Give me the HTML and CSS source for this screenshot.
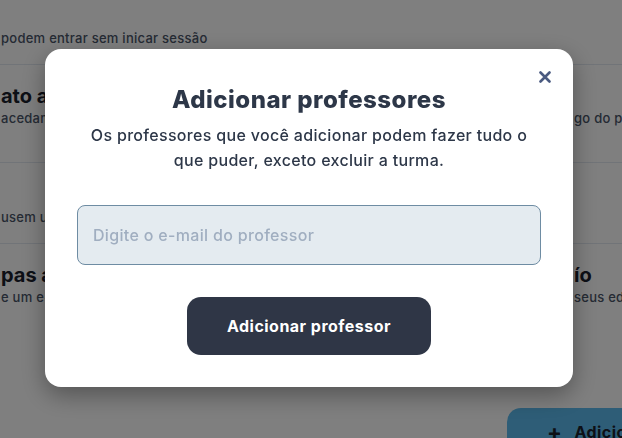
FILE: index.html
```html
<!DOCTYPE html>
<html lang="pt">
<head>
    <meta charset="UTF-8">
    <meta name="viewport" content="width=device-width, initial-scale=1.0">
    <title>Configurações da turma</title>
    <link rel="stylesheet" href="styles.css">
</head>
<body>
    <div class="page">
        <div class="row row-first">
            <div class="col-left">
                <p class="sub">podem entrar sem inicar sessão</p>
            </div>
            <div class="col-right"></div>
        </div>
        <div class="row row-tall">
            <div class="col-left">
                <h3 class="heading">ato automático</h3>
                <p class="sub">acedam à turma sem código</p>
            </div>
            <div class="col-right">
                <h3 class="heading">&nbsp;</h3>
                <p class="sub">go do pro</p>
            </div>
        </div>
        <div class="row row-plain">
            <div class="col-left">
                <p class="sub">usem um código para entrar</p>
            </div>
            <div class="col-right"></div>
        </div>
        <div class="row row-last">
            <div class="col-left">
                <h3 class="heading">pas automáticas</h3>
                <p class="sub">e um e-mail aos alunos</p>
            </div>
            <div class="col-right">
                <h3 class="heading">ío</h3>
                <p class="sub">seus ed</p>
            </div>
        </div>
        <div class="footer">
            <button class="add-btn" type="button"><span class="plus">+</span>Adicio</button>
        </div>
    </div>

    <div class="overlay">
        <div class="modal">
            <button class="close-btn" type="button" aria-label="Fechar">
                <svg width="12" height="12" viewBox="0 0 12 12">
                    <path d="M1.5 1.5 L10.5 10.5 M10.5 1.5 L1.5 10.5" stroke="currentColor" stroke-width="2.6" stroke-linecap="round"/>
                </svg>
            </button>
            <h2 class="modal-title">Adicionar professores</h2>
            <p class="modal-text">Os professores que você adicionar podem fazer tudo o que puder, exceto excluir a turma.</p>
            <input class="email-input" type="email" placeholder="Digite o e-mail do professor">
            <button class="submit-btn" type="button">Adicionar professor</button>
        </div>
    </div>
</body>
</html>
```
FILE: styles.css
```css
body {
    margin: 0;
    overflow: hidden;
    font-family: Inter, "Noto Sans", sans-serif;
    background-color: #fff;
    color: #1a202c;
}

.page {
    width: 622px;
}

.row {
    display: flex;
    border-bottom: 1px solid #e2e8f0;
}

.row-first {
    padding: 29px 0 17px;
}

.row-tall {
    padding: 18px 0 35px;
}

.row-plain {
    padding: 45px 0 17px;
}

.row-last {
    padding: 18px 0 0;
    border-bottom: none;
}

.col-left {
    flex-shrink: 0;
    width: 573px;
    padding-left: 1px;
    box-sizing: border-box;
    overflow: hidden;
}

.col-right {
    flex: 1;
    min-width: 0;
    padding-left: 1px;
    white-space: nowrap;
}

.heading {
    margin: 0;
    font-size: 20px;
    line-height: 26px;
    font-weight: 700;
    color: #1a202c;
    white-space: nowrap;
}

.sub {
    margin: 0;
    font-size: 13px;
    line-height: 18px;
    font-weight: 500;
    color: #4a5568;
    letter-spacing: 0.02em;
    white-space: nowrap;
}

.footer {
    display: flex;
    padding-left: 507px;
    margin-top: 102px;
}

.add-btn {
    display: flex;
    align-items: center;
    height: 48px;
    width: 115px;
    padding: 0 0 0 40px;
    border: none;
    border-radius: 14px 0 0 14px;
    background-color: #5cbbee;
    color: #1a202c;
    font-family: inherit;
    font-size: 16px;
    font-weight: 700;
    letter-spacing: 0.03em;
    white-space: nowrap;
    overflow: hidden;
}

.plus {
    font-size: 22px;
    margin-right: 12px;
}

.overlay {
    position: fixed;
    inset: 0;
    background-color: rgba(0, 0, 0, 0.5);
    display: flex;
    align-items: flex-start;
    padding: 49px 0 0 45px;
}

.modal {
    position: relative;
    width: 528px;
    box-sizing: border-box;
    padding: 36px 32px 32px;
    background-color: #fff;
    border-radius: 16px;
    box-shadow: 0 8px 24px rgba(0, 0, 0, 0.35);
    display: flex;
    flex-direction: column;
    align-items: center;
    text-align: center;
    color: #2d3748;
    letter-spacing: 0.03em;
}

.close-btn {
    position: absolute;
    top: 22px;
    right: 22px;
    width: 12px;
    height: 12px;
    padding: 0;
    border: none;
    background: none;
    color: #4a5a80;
    display: flex;
}

.modal-title {
    margin: 0;
    font-size: 24px;
    line-height: 30px;
    font-weight: 800;
    letter-spacing: 0.02em;
    color: #2d3748;
}

.modal-text {
    margin: 8px 0 0;
    font-size: 16px;
    line-height: 25px;
    font-weight: 500;
    letter-spacing: 0.02em;
    color: #2d3748;
}

.email-input {
    width: 100%;
    height: 60px;
    margin-top: 32px;
    padding: 0 15px;
    box-sizing: border-box;
    border: 1px solid #6e8ca3;
    border-radius: 8px;
    background-color: #e4ebf0;
    font-family: inherit;
    font-size: 16px;
    font-weight: 500;
    letter-spacing: 0.02em;
    color: #2d3748;
}

.email-input::placeholder {
    color: #a0aec0;
}

.submit-btn {
    width: 244px;
    height: 58px;
    margin-top: 32px;
    border: none;
    border-radius: 14px;
    background-color: #2f3646;
    color: #fff;
    font-family: inherit;
    font-size: 16px;
    font-weight: 700;
    letter-spacing: 0.03em;
    cursor: pointer;
}
```
